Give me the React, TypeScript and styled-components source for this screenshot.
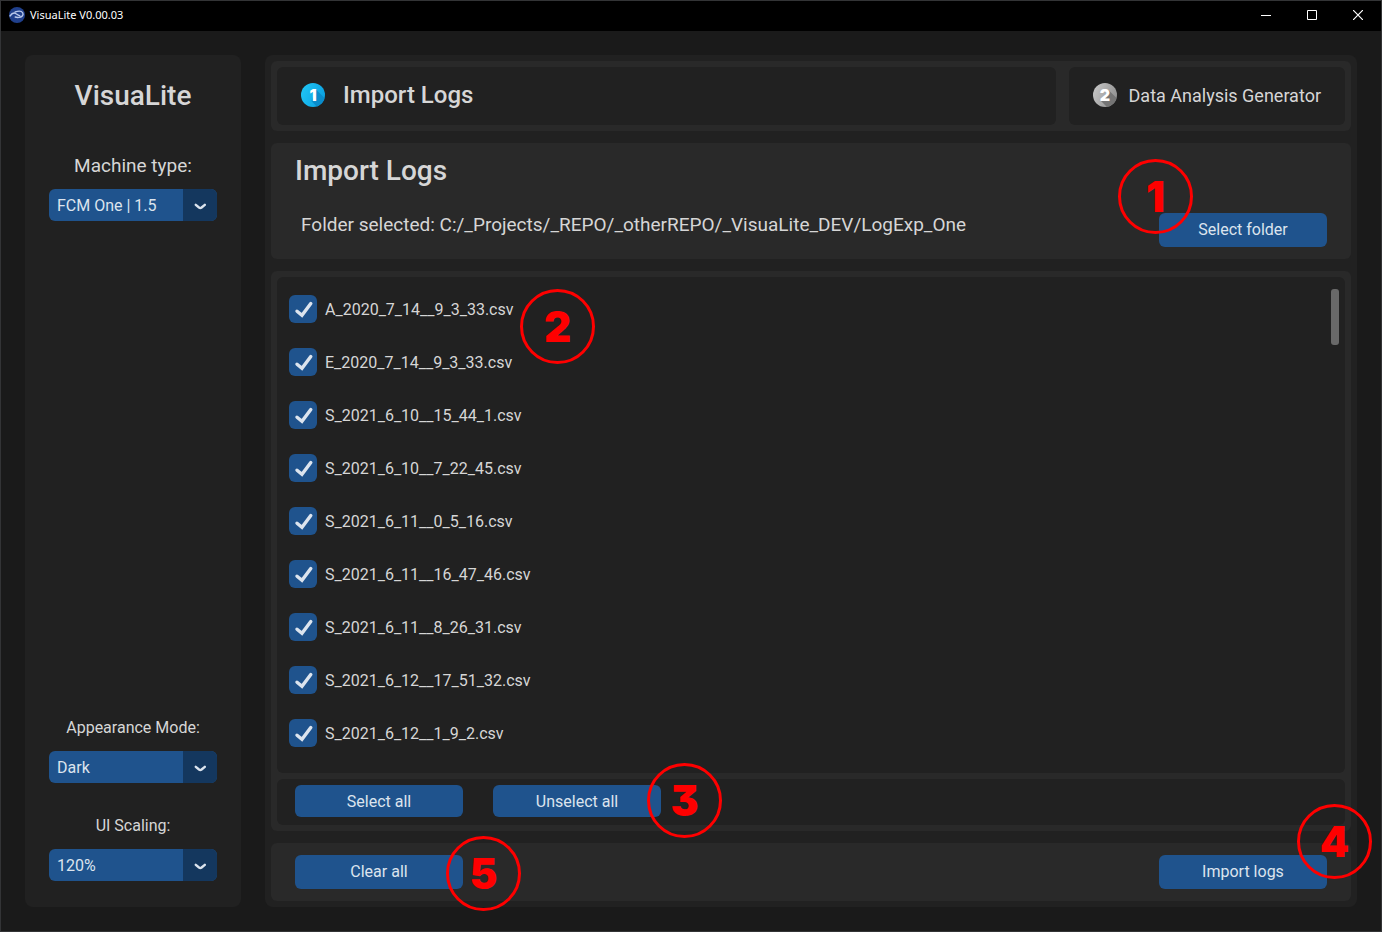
import React, { useState } from "react";
import styled, { createGlobalStyle, css } from "styled-components";

const GlobalStyle = createGlobalStyle`
  *, *::before, *::after { box-sizing: border-box; }
  body {
    margin: 0;
    background: #1a1a1a;
    color: #dce4ee;
    font-family: Roboto, "Liberation Sans", sans-serif;
    font-size: 16px;
  }
`;

const blue = "#1f538d";
const blueDark = "#14375e";
const surface = "#212121";
const raised = "#292929";
const text = "#d6d6d6";

const Window = styled.div`
  min-height: 100vh;
  display: flex;
  flex-direction: column;
  border: 1px solid #333436;
  background: #1a1a1a;
`;

const TitleBar = styled.header`
  height: 30px;
  display: flex;
  align-items: center;
  gap: 5px;
  padding: 0 0 2px 8px;
  background: #000;
  color: #fff;
  font-family: "Noto Sans", "Open Sans", sans-serif;
  font-size: 11px;
  line-height: 16px;
`;

const WindowTitle = styled.span`
  flex: 1;
`;

const WindowButton = styled.button`
  width: 46px;
  height: 28px;
  display: grid;
  place-items: center;
  border: 0;
  padding: 0;
  background: none;
  color: #fff;
`;

const WindowButtons = styled.div`
  display: flex;
`;

const Body = styled.div`
  flex: 1;
  display: flex;
  gap: 24px;
  padding: 24px;
`;

const Sidebar = styled.aside`
  flex: 0 0 216px;
  display: flex;
  flex-direction: column;
  align-items: center;
  padding: 24px 24px 26px;
  border-radius: 8px;
  background: ${surface};
`;

const Brand = styled.h1`
  margin: 0 0 41px;
  font-size: 28px;
  line-height: 34px;
  font-weight: 500;
  color: ${text};
`;

const Spacer = styled.div`
  flex: 1;
`;

const Field = styled.div<{ $large?: boolean }>`
  align-self: stretch;
  display: flex;
  flex-direction: column;
  gap: 11px;

  & + & {
    margin-top: 31px;
  }

  label {
    text-align: center;
    color: ${text};
    font-size: ${(p) => (p.$large ? "19px" : "16px")};
    line-height: 24px;
  }
`;

const SelectBox = styled.div`
  position: relative;
  height: 32px;
`;

const Select = styled.select`
  appearance: none;
  width: 100%;
  height: 32px;
  padding: 0 40px 0 8px;
  border: 0;
  border-radius: 6px;
  background: ${blue};
  color: #dce4ee;
  font: inherit;
`;

const SelectArrow = styled.span`
  position: absolute;
  top: 0;
  right: 0;
  width: 34px;
  height: 32px;
  display: grid;
  place-items: center;
  padding-top: 2px;
  border-radius: 0 6px 6px 0;
  background: ${blueDark};
  pointer-events: none;
`;

const Main = styled.main`
  flex: 1;
  min-width: 0;
  display: flex;
  flex-direction: column;
  gap: 12px;
  padding: 6px;
  border-radius: 8px;
  background: ${surface};
`;

const Panel = styled.section<{ $grow?: boolean }>`
  display: flex;
  flex-direction: column;
  gap: 6px;
  padding: 6px;
  border-radius: 6px;
  background: ${raised};
  ${(p) => p.$grow && css`flex: 1;`}
`;

const Steps = styled.nav`
  display: flex;
  gap: 13px;
`;

const Step = styled.a<{ $active?: boolean }>`
  height: 58px;
  display: flex;
  align-items: center;
  gap: ${(p) => (p.$active ? "18px" : "12px")};
  padding: 0 24px 2px;
  border-radius: 6px;
  background: ${surface};
  color: ${text};
  text-decoration: none;
  font-size: ${(p) => (p.$active ? "24px" : "18px")};
  font-weight: ${(p) => (p.$active ? 500 : 400)};
  ${(p) => p.$active && css`flex: 1;`}
`;

const FolderBlock = styled.div`
  display: flex;
  align-items: flex-end;
  justify-content: space-between;
  padding: 4px 18px 6px;
`;

const Heading = styled.h2`
  margin: 0 0 24px;
  font-size: 28px;
  line-height: 36px;
  font-weight: 500;
  color: ${text};
`;

const FolderPath = styled.p`
  margin: 0 0 10px 6px;
  font-size: 19px;
  line-height: 24px;
  color: ${text};
`;

const Anchor = styled.span`
  position: relative;
  display: inline-flex;
`;

const Button = styled.button<{ $tall?: boolean }>`
  width: 168px;
  height: ${(p) => (p.$tall ? "34px" : "32px")};
  border: 0;
  border-radius: 6px;
  padding: ${(p) => (p.$tall ? "0 0 2px" : "0")};
  background: ${blue};
  color: #dce4ee;
  font: inherit;
`;

const Callout = styled.span<{ $left: number; $top: number }>`
  position: absolute;
  left: ${(p) => p.$left}px;
  top: ${(p) => p.$top}px;
  z-index: 1;
  width: 75px;
  height: 75px;
  display: grid;
  place-items: center;
  border: 3px solid #f00;
  border-radius: 50%;
  color: #f00;
  font-family: Inter, sans-serif;
  font-size: 42px;
  line-height: 48px;
  font-weight: 900;
  font-feature-settings: "cv09";
  pointer-events: none;
`;

const ListArea = styled.div`
  flex: 1;
  display: flex;
  justify-content: space-between;
  padding: 12px 6px 12px 12px;
  border-radius: 6px;
  background: ${surface};
`;

const FileList = styled.ul`
  margin: 0;
  padding: 6px 0 0;
  list-style: none;
  display: flex;
  flex-direction: column;
  gap: 25px;
`;

const FileItem = styled.li`
  position: relative;
  display: flex;
`;

const FileLabel = styled.label`
  position: relative;
  display: flex;
  align-items: center;
  gap: 8px;
  height: 28px;
  color: ${text};
`;

const Check = styled.input`
  appearance: none;
  width: 28px;
  height: 28px;
  margin: 0;
  border: 3px solid #949a9f;
  border-radius: 6px;

  &:checked {
    border: 0;
    background: ${blue};
  }

  & + svg {
    position: absolute;
    left: 0;
    top: 0;
    visibility: hidden;
    pointer-events: none;
  }

  &:checked + svg {
    visibility: visible;
  }
`;

const ScrollThumb = styled.div`
  width: 8px;
  height: 56px;
  border-radius: 3px;
  background: #696969;
`;

const Actions = styled.div<{ $inset?: boolean }>`
  display: flex;
  gap: 30px;
  padding: 6px 18px;
  ${(p) =>
    p.$inset
      ? css`
          height: 46px;
          border-radius: 6px;
          background: ${surface};
        `
      : css`
          justify-content: space-between;
        `}
`;

const Logo = () => (
  <svg width="16" height="16" viewBox="0 0 16 16" aria-hidden="true">
    <circle cx="8" cy="8" r="8" fill="#20408c" />
    <path
      d="M1 9C2.500 6.800 4.500 5.600 6.300 6.300c1.700.7 2 2 4.400 2.300M6.200 4.900C9 4 12.700 4 13.800 6c1 2.200-1 4.200-4 4.400-1.500.1-2.600 0-3.600-.4"
      fill="none"
      stroke="#b9c8ea"
      strokeWidth="1.400"
      strokeLinecap="round"
    />
  </svg>
);

const StepIcon = ({ n, from, to, shade }: { n: number; from: string; to: string; shade: string }) => (
  <svg width="24" height="24" viewBox="0 0 24 24" aria-hidden="true">
    <defs>
      <linearGradient id={`disc${n}`} x1="0" y1="0.300" x2="1" y2="0.700">
        <stop offset="0" stopColor={from} />
        <stop offset="1" stopColor={to} />
      </linearGradient>
      <clipPath id={`clip${n}`}>
        <circle cx="12" cy="12" r="12" />
      </clipPath>
    </defs>
    <circle cx="12" cy="12" r="12" fill={`url(#disc${n})`} />
    <path
      d={n === 1 ? "M14.500 6L26 17.500V26H18L10.500 18Z" : "M15.500 7L27 18.500V27H17L8 18Z"}
      fill={shade}
      clipPath={`url(#clip${n})`}
    />
    <text
      x="12"
      y="18"
      textAnchor="middle"
      fill="#fff"
      fontFamily="Inter, sans-serif"
      fontWeight="900"
      fontSize="16"
    >
      {n}
    </text>
  </svg>
);

const Chevron = () => (
  <svg width="12" height="8" viewBox="0 0 12 8" aria-hidden="true">
    <path
      d="M1.800 2.800L5 5.500Q6.300 6.500 7.600 5.500L10.800 2.800"
      fill="none"
      stroke="#dce4ee"
      strokeWidth="2.400"
      strokeLinecap="round"
    />
  </svg>
);

const CheckMark = () => (
  <svg width="28" height="28" viewBox="0 0 28 28" aria-hidden="true">
    <path
      d="M8 16.200L13 20.300L21.800 8.600"
      fill="none"
      stroke="#dce4ee"
      strokeWidth="3.400"
      strokeLinecap="round"
    />
  </svg>
);

type DropdownProps = { id: string; label: string; options: string[]; initial: string; large?: boolean };

const Dropdown = ({ id, label, options, initial, large }: DropdownProps) => (
  <Field $large={large}>
    <label htmlFor={id}>{label}</label>
    <SelectBox>
      <Select id={id} defaultValue={initial}>
        {options.map((o) => (
          <option key={o}>{o}</option>
        ))}
      </Select>
      <SelectArrow>
        <Chevron />
      </SelectArrow>
    </SelectBox>
  </Field>
);

const files = [
  "A_2020_7_14__9_3_33.csv",
  "E_2020_7_14__9_3_33.csv",
  "S_2021_6_10__15_44_1.csv",
  "S_2021_6_10__7_22_45.csv",
  "S_2021_6_11__0_5_16.csv",
  "S_2021_6_11__16_47_46.csv",
  "S_2021_6_11__8_26_31.csv",
  "S_2021_6_12__17_51_32.csv",
  "S_2021_6_12__1_9_2.csv",
];

export default function App() {
  const [selected, setSelected] = useState<string[]>(files);
  const toggle = (name: string) =>
    setSelected((s) => (s.includes(name) ? s.filter((f) => f !== name) : [...s, name]));

  return (
    <>
      <GlobalStyle />
      <Window>
        <TitleBar>
          <Logo />
          <WindowTitle>VisuaLite V0.00.03</WindowTitle>
          <WindowButtons>
            <WindowButton aria-label="Minimize">
              <svg width="10" height="10" viewBox="0 0 10 10">
                <path d="M0 5.500H10" stroke="currentColor" />
              </svg>
            </WindowButton>
            <WindowButton aria-label="Maximize">
              <svg width="10" height="10" viewBox="0 0 10 10">
                <path d="M.5 .5H9.500V9.500H.5Z" fill="none" stroke="currentColor" />
              </svg>
            </WindowButton>
            <WindowButton aria-label="Close">
              <svg width="10" height="10" viewBox="0 0 10 10">
                <path d="M0 0L10 10M10 0L0 10" stroke="currentColor" strokeWidth="1.200" />
              </svg>
            </WindowButton>
          </WindowButtons>
        </TitleBar>
        <Body>
          <Sidebar>
            <Brand>VisuaLite</Brand>
            <Dropdown id="machine" label="Machine type:" options={["FCM One | 1.5"]} initial="FCM One | 1.5" large />
            <Spacer />
            <Dropdown id="appearance" label="Appearance Mode:" options={["Dark", "Light", "System"]} initial="Dark" />
            <Dropdown id="scaling" label="UI Scaling:" options={["80%", "100%", "120%"]} initial="120%" />
          </Sidebar>
          <Main>
            <Panel>
              <Steps>
                <Step href="#import" $active>
                  <StepIcon n={1} from="#1fc4f4" to="#0a9fe0" shade="#0a8ccb" />
                  Import Logs
                </Step>
                <Step href="#analysis">
                  <StepIcon n={2} from="#c4c4c4" to="#8f8f8f" shade="#757575" />
                  Data Analysis Generator
                </Step>
              </Steps>
            </Panel>
            <Panel>
              <FolderBlock>
                <div>
                  <Heading>Import Logs</Heading>
                  <FolderPath>Folder selected: C:/_Projects/_REPO/_otherREPO/_VisuaLite_DEV/LogExp_One</FolderPath>
                </div>
                <Anchor>
                  <Button $tall>Select folder</Button>
                  <Callout $left={-41} $top={-54}>1</Callout>
                </Anchor>
              </FolderBlock>
            </Panel>
            <Panel $grow>
              <ListArea>
                <FileList>
                  {files.map((name, i) => (
                    <FileItem key={name}>
                      <FileLabel>
                        <Check type="checkbox" checked={selected.includes(name)} onChange={() => toggle(name)} />
                        <CheckMark />
                        {name}
                      </FileLabel>
                      {i === 0 && <Callout $left={231} $top={-6}>2</Callout>}
                    </FileItem>
                  ))}
                </FileList>
                <ScrollThumb />
              </ListArea>
              <Actions $inset>
                <Button onClick={() => setSelected(files)}>Select all</Button>
                <Anchor>
                  <Button onClick={() => setSelected([])}>Unselect all</Button>
                  <Callout $left={154} $top={-22}>3</Callout>
                </Anchor>
              </Actions>
            </Panel>
            <Panel>
              <Actions>
                <Anchor>
                  <Button $tall>Clear all</Button>
                  <Callout $left={151} $top={-19}>5</Callout>
                </Anchor>
                <Anchor>
                  <Button $tall>Import logs</Button>
                  <Callout $left={138} $top={-51}>4</Callout>
                </Anchor>
              </Actions>
            </Panel>
          </Main>
        </Body>
      </Window>
    </>
  );
}
